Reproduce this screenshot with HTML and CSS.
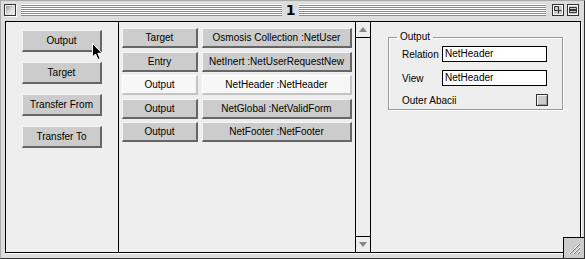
FILE: index.html
```html
<!DOCTYPE html>
<html lang="en">

<head>
    <meta charset="UTF-8">
    <meta name="viewport" content="width=device-width, initial-scale=1.0">
    <title>1</title>
    <link rel="stylesheet" href="styles.css">
</head>

<body>
    <div class="window">
        <div class="titlebar">
            <span class="close-box"></span>
            <div class="stripes">
                <span class="title">1</span>
            </div>
            <span class="box-btn">
                <svg width="12" height="12" viewBox="0 0 12 12">
                    <rect x="0.5" y="0.5" width="11" height="11" fill="#ccc" stroke="#333" />
                    <path d="M1.5 1.5 H10.5 V10.5 H1.5 Z" fill="none" stroke="#fff" />
                    <path d="M2.5 2.5 H6.5 V6.5 H2.5 Z M6.5 6.5 H9.5 M6.5 6.5 V9.5" fill="none" stroke="#333" />
                </svg>
            </span>
            <span class="box-btn">
                <svg width="12" height="12" viewBox="0 0 12 12">
                    <rect x="0.5" y="0.5" width="11" height="11" fill="#ccc" stroke="#333" />
                    <path d="M1.5 1.5 H10.5 V10.5 H1.5 Z" fill="none" stroke="#fff" />
                    <path d="M2.5 3.5 H9.5 V8.5 H2.5 Z M2.5 5.5 H9.5 M2.5 6.5 H9.5" fill="none" stroke="#333" />
                </svg>
            </span>
        </div>

        <div class="content">
            <div class="pane-left">
                <div class="btn">Output</div>
                <div class="btn">Target</div>
                <div class="btn">Transfer From</div>
                <div class="btn">Transfer To</div>
                <svg class="pointer" width="12" height="18" viewBox="0 0 12 18">
                    <path d="M0.5 0.5 V14 L3.5 11 L6 16.5 L8.2 15.5 L5.8 10.3 H10 Z" fill="#000" stroke="#fff" stroke-width="1" />
                </svg>
            </div>

            <div class="pane-list">
                <div class="row">
                    <div class="btn">Target</div>
                    <div class="btn">Osmosis Collection :NetUser</div>
                </div>
                <div class="row">
                    <div class="btn">Entry</div>
                    <div class="btn">NetInert :NetUserRequestNew</div>
                </div>
                <div class="row">
                    <div class="btn selected">Output</div>
                    <div class="btn selected">NetHeader :NetHeader</div>
                </div>
                <div class="row">
                    <div class="btn">Output</div>
                    <div class="btn">NetGlobal :NetValidForm</div>
                </div>
                <div class="row">
                    <div class="btn">Output</div>
                    <div class="btn">NetFooter :NetFooter</div>
                </div>
            </div>

            <div class="scrollbar">
                <div class="arrow arrow-up">
                    <svg width="8" height="5" viewBox="0 0 8 5"><polygon points="4,0 8,5 0,5" fill="#888" /></svg>
                </div>
                <div class="track"></div>
                <div class="arrow arrow-down">
                    <svg width="8" height="5" viewBox="0 0 8 5"><polygon points="0,0 8,0 4,5" fill="#888" /></svg>
                </div>
            </div>

            <div class="pane-right">
                <fieldset class="group">
                    <legend>Output</legend>
                    <div class="field-row">
                        <span class="label">Relation</span>
                        <span class="text-field">NetHeader</span>
                    </div>
                    <div class="field-row">
                        <span class="label">View</span>
                        <span class="text-field">NetHeader</span>
                    </div>
                    <div class="field-row check-row">
                        <span class="label">Outer Abacii</span>
                        <span class="checkbox"></span>
                    </div>
                </fieldset>
            </div>
        </div>

        <div class="grow-box">
            <svg width="20" height="20" viewBox="0 0 20 20">
                <path d="M5 16 L15 6 M9 16 L16 9 M13 16 L16 13" stroke="#fff" stroke-width="1" />
                <path d="M6 16 L16 6 M10 16 L16 10 M14 16 L16 14" stroke="#777" stroke-width="1" />
            </svg>
        </div>
    </div>
</body>

</html>
```

FILE: styles.css
```css
body {
    margin: 0;
    padding: 0;
    font-family: "Liberation Sans", Arial, sans-serif;
    font-size: 10px;
    color: #000;
}

.window {
    position: relative;
    width: 585px;
    height: 259px;
    box-sizing: border-box;
    background-color: #dddddd;
    border: 1px solid;
    border-color: #aaa #333 #333 #aaa;
    display: flex;
    flex-direction: column;
}

/* title bar */

.titlebar {
    height: 20px;
    box-sizing: border-box;
    display: flex;
    align-items: flex-start;
    padding: 3px 5px 0 3px;
}

.close-box {
    width: 12px;
    height: 12px;
    box-sizing: border-box;
    border: 1px solid #333;
    background: linear-gradient(135deg, #888 0%, #ddd 55%, #f4f4f4 100%);
    box-shadow: 1px 1px 0 #fff, inset 1px 1px 0 #eee;
}

.stripes {
    flex: 1;
    height: 12px;
    margin: 0 3px 0 5px;
    padding-left: 14px;
    display: flex;
    justify-content: center;
    background: repeating-linear-gradient(to bottom, #fff 0 1px, #8a8a8a 1px 2px);
}

.title {
    padding: 0 4px;
    background-color: #dddddd;
    font-family: "DejaVu Sans", sans-serif;
    font-weight: bold;
    font-size: 14px;
    line-height: 13px;
}

.box-btn {
    display: flex;
    margin-left: 3px;
}

/* content */

.content {
    flex: 1;
    display: flex;
    margin: 0 3px 5px 4px;
    border: 1px solid #000;
    box-shadow: 1px 1px 0 #fff;
    background-color: #eeeeee;
}

.pane-left {
    position: relative;
    width: 113px;
    box-sizing: border-box;
    border-right: 1px solid #000;
    padding: 8px 0 0 16px;
    display: flex;
    flex-direction: column;
    gap: 10px;
}

.pane-left .btn {
    width: 80px;
    height: 22px;
}

.btn {
    box-sizing: border-box;
    display: flex;
    align-items: center;
    justify-content: center;
    white-space: nowrap;
    background-color: #cccccc;
    border-style: solid;
    border-width: 1px 2px 2px 1px;
    border-color: #f6f6f6 #666 #666 #f6f6f6;
}

.btn.selected {
    background-color: #f7f7f7;
    border-color: #fff #c4c4c4 #c4c4c4 #fff;
}

.pointer {
    position: absolute;
    left: 86px;
    top: 21px;
}

.pane-list {
    width: 236px;
    padding: 6px 0 0 3px;
    box-sizing: border-box;
    display: flex;
    flex-direction: column;
    gap: 3.5px;
}

.row {
    display: grid;
    grid-template-columns: 76px 150px;
    column-gap: 4px;
    height: 20px;
}

.scrollbar {
    width: 16px;
    box-sizing: border-box;
    border-left: 1px solid #000;
    border-right: 1px solid #000;
    display: flex;
    flex-direction: column;
}

.arrow {
    height: 15px;
    display: flex;
    align-items: center;
    justify-content: center;
}

.arrow-up {
    border-bottom: 1px solid #000;
}

.arrow-down {
    border-top: 1px solid #000;
}

.track {
    flex: 1;
}

.pane-right {
    flex: 1;
    padding: 0 17px;
}

.group {
    margin: 9px 0 0;
    padding: 3px 14px 3px 8px;
    border: 1px solid #999;
    box-shadow: inset 1px 1px 0 #fff, 1px 1px 0 #fff;
}

.group legend {
    padding: 0 3px;
    line-height: 12px;
}

.field-row {
    display: flex;
    align-items: center;
    height: 16px;
    margin-bottom: 8px;
    padding-left: 5px;
}

.label {
    width: 40px;
    white-space: nowrap;
}

.text-field {
    width: 105px;
    height: 16px;
    box-sizing: border-box;
    border: 1px solid #000;
    background-color: #fff;
    padding-left: 2px;
    line-height: 14px;
}

.check-row {
    justify-content: space-between;
    height: 12px;
    margin-bottom: 0;
}

.checkbox {
    width: 12px;
    height: 12px;
    box-sizing: border-box;
    border: 1px solid #333;
    background-color: #cccccc;
    box-shadow: inset 1px 1px 0 #f4f4f4, inset -1px -1px 0 #999;
}

.grow-box {
    position: absolute;
    right: 0;
    bottom: 0;
    width: 21px;
    height: 21px;
    box-sizing: border-box;
    border-left: 1px solid #000;
    border-top: 1px solid #000;
    background-color: #cccccc;
}
```
